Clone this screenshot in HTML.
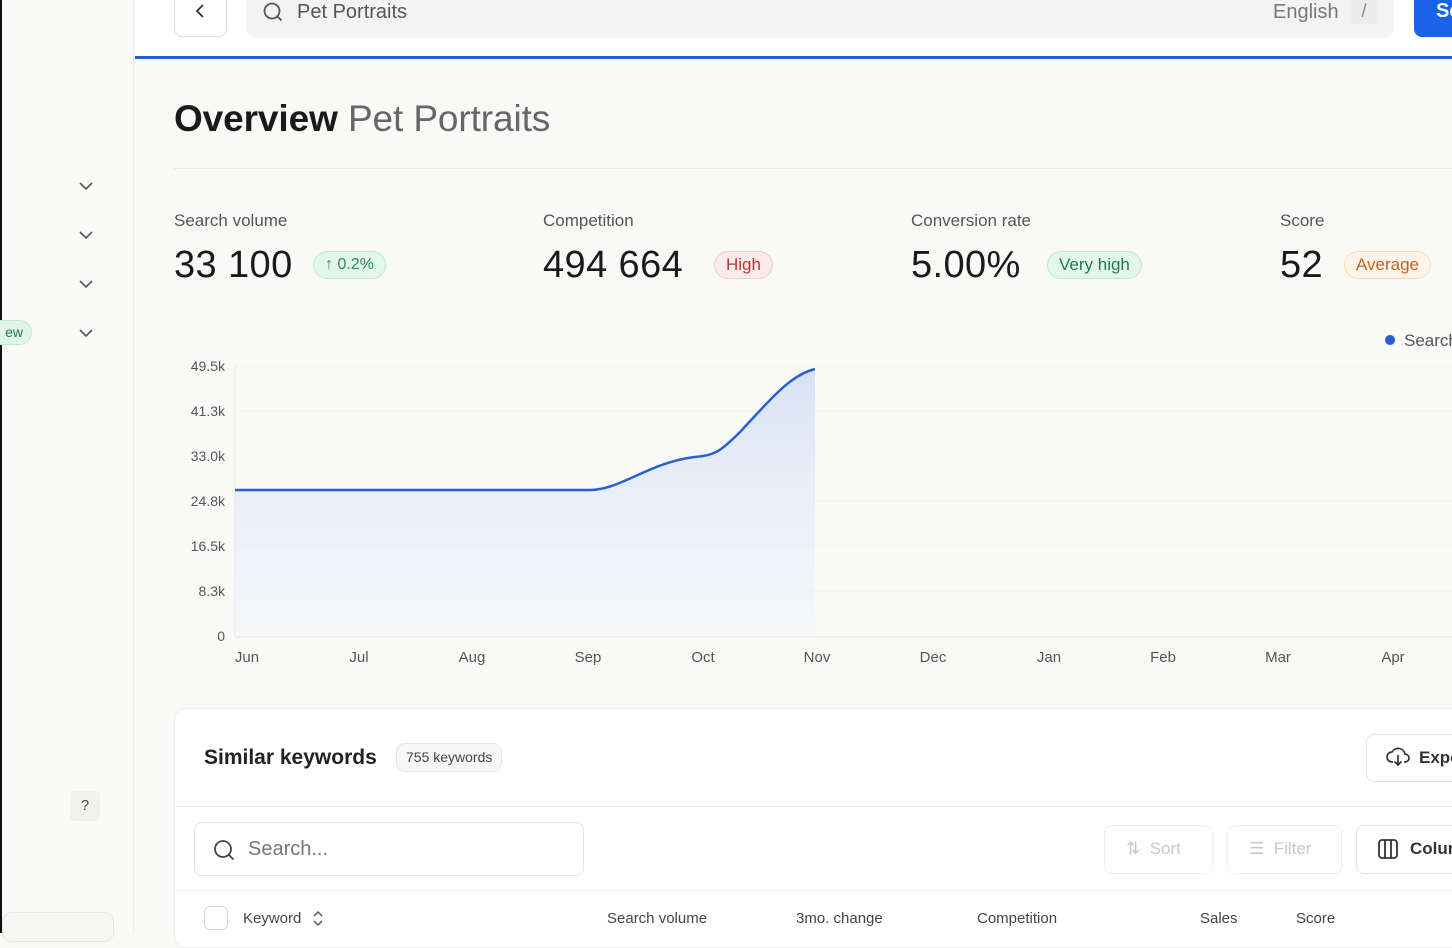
<!DOCTYPE html>
<html><head><meta charset="utf-8"><style>
*{margin:0;padding:0;box-sizing:border-box}
body{width:1452px;height:933px;overflow:hidden;background:#f9faf8;font-family:"Liberation Sans",sans-serif;position:relative;color:#1a1a1a}
.a{position:absolute}
.chev{position:absolute;left:79px;width:14px;height:10px}
.lbl{font-size:17px;color:#555}
.big{font-size:38px;color:#1a1a1a;letter-spacing:0.4px}
.pill{position:absolute;height:28px;border-radius:14px;font-size:17px;line-height:26px;padding:0 11px;border:1px solid}
.yl{position:absolute;right:1227px;font-size:14px;color:#555;text-align:right}
.xl{position:absolute;top:649px;font-size:15px;color:#555;transform:translateX(-50%)}
.th{position:absolute;top:910px;font-size:15px;color:#444}
.btn{position:absolute;border:1px solid #e2e2e2;border-radius:8px;background:#fff}
</style></head><body>
<div class="a" style="left:0;top:0;width:2px;height:933px;background:#111"></div>
<div class="a" style="left:2px;top:0;width:132px;height:933px;background:#fafbf9;border-right:1px solid #ececec"></div>
<svg class="chev" style="top:181px" viewBox="0 0 14 10"><path d="M1 2l6 6 6-6" fill="none" stroke="#555" stroke-width="1.6"/></svg>
<svg class="chev" style="top:230px" viewBox="0 0 14 10"><path d="M1 2l6 6 6-6" fill="none" stroke="#555" stroke-width="1.6"/></svg>
<svg class="chev" style="top:279px" viewBox="0 0 14 10"><path d="M1 2l6 6 6-6" fill="none" stroke="#555" stroke-width="1.6"/></svg>
<svg class="chev" style="top:328px" viewBox="0 0 14 10"><path d="M1 2l6 6 6-6" fill="none" stroke="#555" stroke-width="1.6"/></svg>
<div class="a" style="left:-20px;top:320px;width:52px;height:25px;border-radius:13px;background:#dff5ea;border:1px solid #bfe8d3;color:#1f7a52;font-size:14px;line-height:23px;text-align:right;padding-right:8px">ew</div>
<div class="a" style="left:70px;top:791px;width:30px;height:30px;border-radius:5px;background:#f1f2f0;font-size:15px;color:#444;text-align:center;line-height:30px">?</div>
<div class="a" style="left:2px;top:912px;width:112px;height:30px;border:1px solid #e6e6e6;border-radius:10px;background:#f7f8f6"></div>

<div class="a" style="left:135px;top:0;width:1317px;height:57px;background:#fff"></div>
<div class="a" style="left:174px;top:-10px;width:53px;height:47px;border:1px solid #ddd;border-radius:8px;background:#fff"></div>
<svg class="a" style="left:194px;top:3px" width="12" height="16" viewBox="0 0 12 16"><path d="M9 2L3 8l6 6" fill="none" stroke="#333" stroke-width="1.8"/></svg>
<div class="a" style="left:246px;top:-10px;width:1148px;height:48px;border-radius:10px;background:#f2f3f2"></div>
<svg class="a" style="left:262px;top:1px" width="22" height="22" viewBox="0 0 22 22"><circle cx="10" cy="10" r="7.5" fill="none" stroke="#555" stroke-width="1.8"/><path d="M15.5 15.5l4 4" stroke="#555" stroke-width="1.8"/></svg>
<div class="a" style="left:297px;top:1px;font-size:20px;color:#555">Pet Portraits</div>
<div class="a" style="left:1273px;top:1px;font-size:20px;color:#777">English</div>
<div class="a" style="left:1350px;top:-6px;width:28px;height:30px;background:#ececec;border-radius:4px;color:#888;font-size:18px;text-align:center;line-height:34px">/</div>
<div class="a" style="left:1414px;top:-10px;width:60px;height:47px;background:#1b63e6;border-radius:8px;color:#fff;font-weight:bold;font-size:20px;padding:10px 0 0 22px">Se</div>
<div class="a" style="left:135px;top:56px;width:1317px;height:3px;background:#1f5fd6"></div>

<div class="a" style="left:174px;top:98px;font-size:37px;font-weight:bold;color:#1a1a1a;letter-spacing:-0.1px">Overview <span style="font-weight:normal;color:#666">Pet Portraits</span></div>
<div class="a" style="left:174px;top:168px;width:1278px;height:1px;background:#e8e8e8"></div>

<div class="a lbl" style="left:174px;top:211px">Search volume</div>
<div class="a big" style="left:174px;top:244px">33 100</div>
<div class="pill" style="left:313px;top:251px;background:#e3f6ec;border-color:#bfe8d3;color:#2a8a5c;font-size:16px">↑ 0.2%</div>
<div class="a lbl" style="left:543px;top:211px">Competition</div>
<div class="a big" style="left:543px;top:244px">494 664</div>
<div class="pill" style="left:714px;top:251px;background:#fdeaea;border-color:#f3c9c9;color:#b73737">High</div>
<div class="a lbl" style="left:911px;top:211px">Conversion rate</div>
<div class="a big" style="left:911px;top:244px">5.00%</div>
<div class="pill" style="left:1047px;top:251px;background:#e3f6ec;border-color:#bfe8d3;color:#1f7a52">Very high</div>
<div class="a lbl" style="left:1280px;top:211px">Score</div>
<div class="a big" style="left:1280px;top:244px">52</div>
<div class="pill" style="left:1344px;top:251px;background:#fdf3e6;border-color:#f3dcbc;color:#c0642a">Average</div>

<div class="a" style="left:1385px;top:335px;width:10px;height:10px;border-radius:5px;background:#1f5fd6"></div>
<div class="a" style="left:1404px;top:331px;font-size:17px;color:#555">Search</div>

<div class="yl" style="top:358px">49.5k</div>
<div class="yl" style="top:403px">41.3k</div>
<div class="yl" style="top:448px">33.0k</div>
<div class="yl" style="top:493px">24.8k</div>
<div class="yl" style="top:538px">16.5k</div>
<div class="yl" style="top:583px">8.3k</div>
<div class="yl" style="top:628px">0</div>
<svg class="a" style="left:0;top:0" width="1452" height="700">
<defs><linearGradient id="g" x1="0" y1="0" x2="0" y2="1"><stop offset="0" stop-color="#c9d6f3" stop-opacity=".7"/><stop offset="1" stop-color="#e8eefb" stop-opacity=".2"/></linearGradient></defs>
<g stroke="#f2f2f2" stroke-width="1"><line x1="235" y1="366" x2="1452" y2="366"/><line x1="235" y1="411" x2="1452" y2="411"/><line x1="235" y1="456" x2="1452" y2="456"/><line x1="235" y1="501" x2="1452" y2="501"/><line x1="235" y1="546" x2="1452" y2="546"/><line x1="235" y1="591" x2="1452" y2="591"/></g>
<line x1="235" y1="637" x2="1452" y2="637" stroke="#e6e6e6"/>
<line x1="235" y1="366" x2="235" y2="637" stroke="#e6e6e6"/>
<path d="M235 490 L590 490 C620 490 650 462 695 457 C715 455 720 452 740 432 C770 400 790 375 815 369 L815 637 L235 637Z" fill="url(#g)"/>
<path d="M235 490 L590 490 C620 490 650 462 695 457 C715 455 720 452 740 432 C770 400 790 375 815 369" fill="none" stroke="#2a5fd0" stroke-width="2.5"/>
</svg>
<div class="xl" style="left:247px">Jun</div><div class="xl" style="left:359px">Jul</div><div class="xl" style="left:472px">Aug</div><div class="xl" style="left:588px">Sep</div><div class="xl" style="left:703px">Oct</div><div class="xl" style="left:817px">Nov</div><div class="xl" style="left:933px">Dec</div><div class="xl" style="left:1049px">Jan</div><div class="xl" style="left:1163px">Feb</div><div class="xl" style="left:1278px">Mar</div><div class="xl" style="left:1393px">Apr</div>

<div class="a" style="left:174px;top:708px;width:1300px;height:240px;background:#fff;border:1px solid #ececec;border-radius:12px"></div>
<div class="a" style="left:204px;top:746px;font-size:21px;font-weight:bold;color:#222">Similar keywords</div>
<div class="a" style="left:396px;top:743px;height:29px;padding:0 9px;border:1px solid #e6e6e6;border-radius:9px;background:#f7f7f7;font-size:14px;color:#444;line-height:27px">755 keywords</div>
<div class="btn" style="left:1366px;top:734px;width:100px;height:48px"></div>
<svg class="a" style="left:1386px;top:746px" width="24" height="22" viewBox="0 0 24 22"><path d="M7 16H6a5 5 0 0 1 0-10 7 7 0 0 1 13 2 4 4 0 0 1 0 8h-1" fill="none" stroke="#333" stroke-width="1.7"/><path d="M12 9v10M8.5 15.5L12 19l3.5-3.5" fill="none" stroke="#333" stroke-width="1.7"/></svg>
<div class="a" style="left:1419px;top:748px;font-size:17px;font-weight:bold;color:#333">Export</div>
<div class="a" style="left:175px;top:806px;width:1277px;height:1px;background:#ececec"></div>
<div class="btn" style="left:194px;top:822px;width:390px;height:54px"></div>
<svg class="a" style="left:212px;top:838px" width="24" height="24" viewBox="0 0 24 24"><circle cx="11" cy="11" r="8" fill="none" stroke="#444" stroke-width="1.8"/><path d="M17 17l4.5 4.5" stroke="#444" stroke-width="1.8"/></svg>
<div class="a" style="left:248px;top:838px;font-size:20px;color:#777">Search...</div>
<div class="btn" style="left:1104px;top:825px;width:109px;height:49px;border-color:#eee"></div>
<div class="a" style="left:1126px;top:839px;font-size:17px;color:#c8c8c8">⇅&nbsp; Sort</div>
<div class="btn" style="left:1227px;top:825px;width:115px;height:49px;border-color:#eee"></div>
<div class="a" style="left:1249px;top:839px;font-size:17px;color:#c8c8c8">☰&nbsp; Filter</div>
<div class="btn" style="left:1356px;top:825px;width:110px;height:49px"></div>
<svg class="a" style="left:1377px;top:838px" width="22" height="22" viewBox="0 0 22 22"><rect x="2" y="2" width="18" height="18" rx="3" fill="none" stroke="#333" stroke-width="1.8"/><path d="M8 2v18M14 2v18" stroke="#333" stroke-width="1.8"/></svg>
<div class="a" style="left:1410px;top:839px;font-size:17px;font-weight:bold;color:#333">Columns</div>
<div class="a" style="left:175px;top:890px;width:1277px;height:1px;background:#ececec"></div>
<div class="a" style="left:204px;top:906px;width:24px;height:24px;border:1px solid #d6d6d6;border-radius:6px;background:#fff"></div>
<div class="th" style="left:243px">Keyword</div>
<svg class="a" style="left:312px;top:910px" width="12" height="17" viewBox="0 0 12 17"><path d="M2 6l4-4 4 4M2 11l4 4 4-4" fill="none" stroke="#555" stroke-width="1.5"/></svg>
<div class="th" style="left:607px">Search volume</div>
<div class="th" style="left:796px">3mo. change</div>
<div class="th" style="left:977px">Competition</div>
<div class="th" style="left:1200px">Sales</div>
<div class="th" style="left:1296px">Score</div>
</body></html>
